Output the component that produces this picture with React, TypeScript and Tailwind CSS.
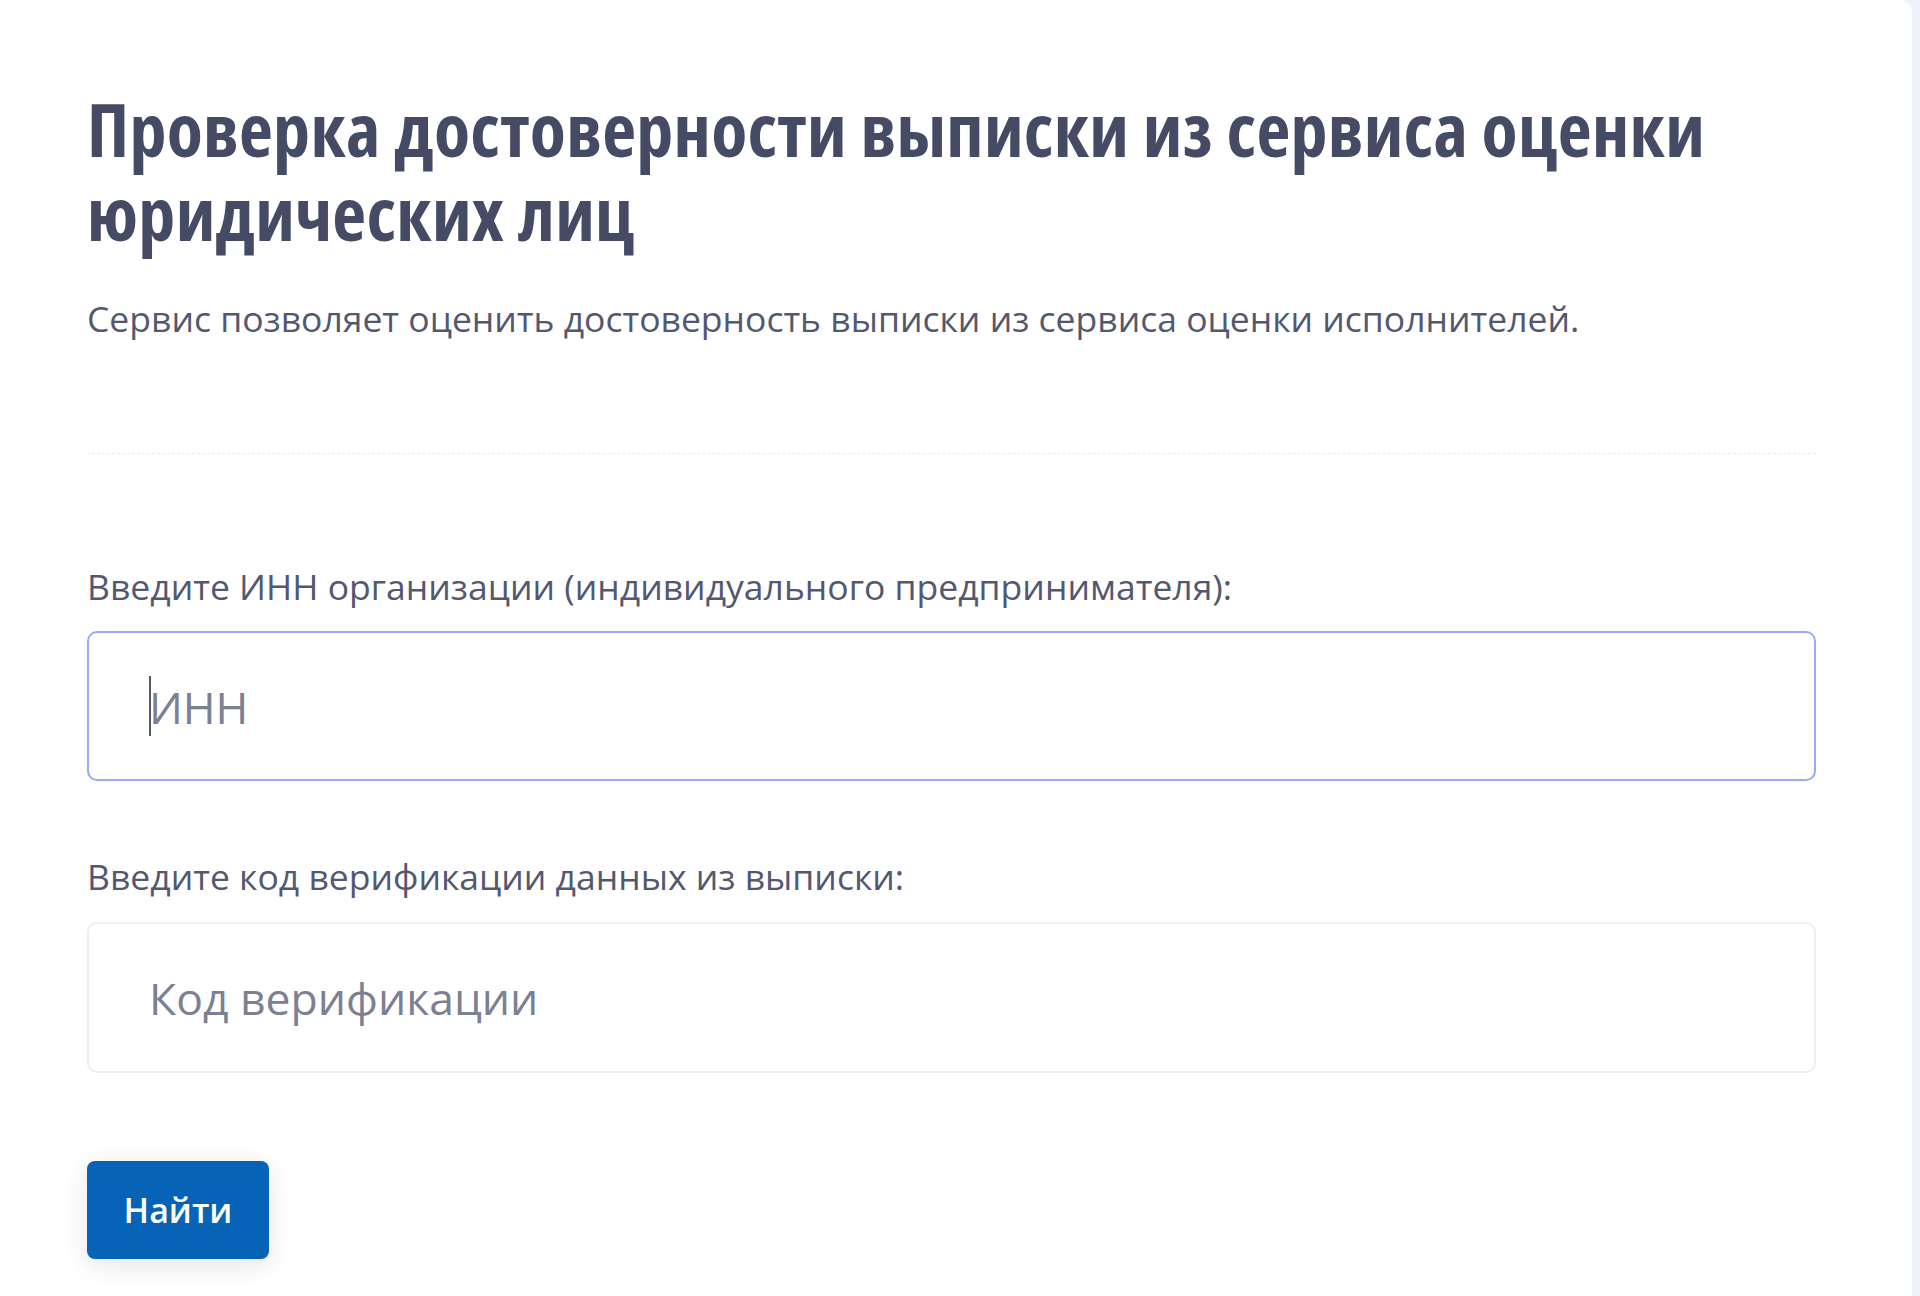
export default function App() {
  return (
    <div className="min-h-screen bg-[#eff1fa] font-['Open_Sans',sans-serif]">
      <div className="min-h-screen w-[1912px] bg-white rounded-tr-[12px] pl-[87px] pr-[96px] pt-[87px] pb-[37px]">
        {/* HEADER */}
        <h1 className="text-[74px] leading-[84px] font-bold font-stretch-condensed tracking-[0.3px] text-[#454b64]">
          Проверка достоверности выписки из сервиса оценки юридических лиц
        </h1>
        <p className="mt-[37px] text-[35.5px] leading-[53px] text-[#535870]">
          Сервис позволяет оценить достоверность выписки из сервиса оценки исполнителей.
        </p>

        <div className="mt-[108px] border-t border-dashed border-[#e9ebef]" />

        {/* FORM */}
        <form className="mt-[107px] flex flex-col" onSubmit={(e) => e.preventDefault()}>
          <label className="text-[35.5px] leading-[51px] text-[#535870]">
            Введите ИНН организации (индивидуального предпринимателя):
          </label>
          <div className="relative mt-[19px]">
            <input
              type="text"
              placeholder="ИНН"
              className="w-full h-[150px] rounded-[10px] border-2 border-[#93acf3] bg-white pl-[60px] text-[44.5px] text-[#454b64] placeholder:text-[#7c8093] outline-none"
            />
            <span className="absolute left-[62px] top-[45px] h-[60px] w-[2px] bg-[#555a6b]" />
          </div>

          <label className="mt-[70px] text-[35.5px] leading-[51px] text-[#535870]">
            Введите код верификации данных из выписки:
          </label>
          <input
            type="text"
            placeholder="Код верификации"
            className="mt-[20px] w-full h-[151px] rounded-[10px] border-2 border-[#eceef2] bg-white pl-[60px] text-[44.5px] text-[#454b64] placeholder:text-[#7c8093] outline-none"
          />

          <div className="mt-[88px]">
            <button
              type="submit"
              className="h-[98px] w-[182px] rounded-[8px] bg-[#0763b6] text-[34px] font-semibold text-white shadow-[0_6px_24px_rgba(30,40,80,0.12)]"
            >
              Найти
            </button>
          </div>
        </form>
      </div>
    </div>
  );
}
